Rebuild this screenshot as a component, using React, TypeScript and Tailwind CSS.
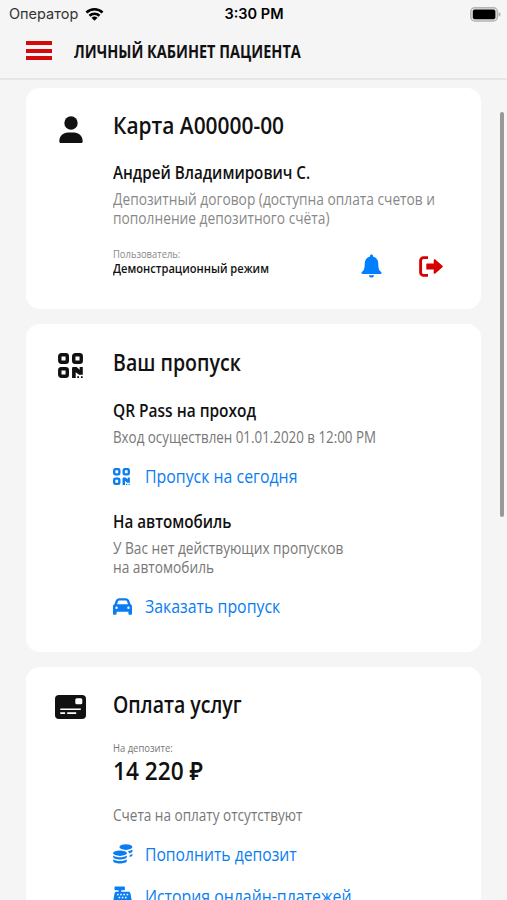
import type { ReactNode } from "react";
import { FaCar } from "react-icons/fa6";

function WifiIcon() {
  return (
    <svg width="19" height="15" viewBox="0 0 20 15" fill="none" stroke="#000" strokeWidth="2.7">
      <path d="M1.5 5.4a12.4 12.4 0 0 1 17 0" />
      <path d="M4.7 8.8a7.8 7.8 0 0 1 10.6 0" />
      <path d="M10 14.2 6.8 11a4.7 4.7 0 0 1 6.4 0z" fill="#000" stroke="none" />
    </svg>
  );
}

function BatteryIcon() {
  return (
    <svg width="31" height="15" viewBox="0 0 31 15">
      <rect x="0.8" y="0.8" width="26.6" height="13.2" rx="4" fill="#e4e4e4" stroke="#b5b5b5" strokeWidth="1.5" />
      <rect x="2.8" y="2.6" width="22.6" height="9.6" rx="2" fill="#000" />
      <path d="M28.6 5.2c1.3.4 2 1.2 2 2.2s-.7 1.800-2 2.200z" fill="#b0b0b0" />
    </svg>
  );
}

function PersonIcon() {
  return (
    <svg width="24" height="28" viewBox="0 0 24 28" fill="#111">
      <circle cx="12" cy="7" r="6.7" />
      <path d="M0.3 25.6C0.3 20 4 16.5 9 16.5h6c5 0 8.7 3.5 8.7 9.1 0 .9-.6 1.5-1.5 1.5H1.8c-.9 0-1.5-.6-1.5-1.5z" />
    </svg>
  );
}

function QrIcon({ size }: { size: number }) {
  return (
    <svg width={size} height={size} viewBox="0 0 24 24" fill="currentColor">
      <g fill="none" stroke="currentColor" strokeWidth="3.3">
        <rect x="1.7" y="1.7" width="7.2" height="7.2" rx="1.5" />
        <rect x="15.1" y="1.7" width="7.2" height="7.2" rx="1.5" />
        <rect x="1.7" y="15.1" width="7.2" height="7.2" rx="1.5" />
      </g>
      <path d="M13.5 14.4q0-1 1-1h3.4l2.9 2.6v-2.6h3v7.4h-3.6l-3.2-2.300v5.500h-3.500z" />
      <path d="M18.500 22.200h1.700v1.800h-1.700zM22 22.200h1.700v1.800H22z" />
    </svg>
  );
}

function BellIcon() {
  return (
    <svg width="21" height="24" viewBox="0 0 21 24" fill="#0080ff">
      <path d="M10.500.4c.9 0 1.500.6 1.500 1.500v.5c3.400.8 5.300 3.500 5.300 7.200 0 5.200.8 6.800 2.800 8.500.8.800.5 1.800-.6 1.800h-18c-1.100 0-1.400-1-.6-1.800 2-1.700 2.800-3.300 2.800-8.500 0-3.700 1.900-6.400 5.300-7.200v-.5c0-.9.600-1.500 1.500-1.500z" />
      <path d="M7.800 21.200h5.400c-.3 1.400-1.400 2.300-2.700 2.300s-2.400-.9-2.700-2.300z" />
    </svg>
  );
}

function LogoutIcon() {
  return (
    <svg width="24" height="21" viewBox="0 0 24 21">
      <path d="M9 1.6H4.6a3 3 0 0 0-3 3v11.8a3 3 0 0 0 3 3H9" fill="none" stroke="#d60000" strokeWidth="2.9" />
      <path d="M8.200 7.400h6.500V4.300c0-.9.900-1.300 1.600-.7l7.100 6.200c.5.400.5 1 0 1.400l-7.100 6.200c-.7.600-1.600.2-1.600-.7v-3.100H8.200c-.5 0-.9-.4-.9-.9V8.300c0-.5.4-.9.9-.9z" fill="#d60000" />
    </svg>
  );
}

function CardIcon() {
  return (
    <svg width="31" height="24" viewBox="0 0 31 24">
      <rect width="31" height="24" rx="4" fill="#111" />
      <rect x="20.3" y="3.2" width="7" height="6" rx="1.5" fill="#fff" />
      <path d="M5.3 13.5h20.5v1.5H5.3zM5.3 17.3h4.8v1.7H5.3zM12.2 17.3h9v1.7h-9z" fill="#fff" />
    </svg>
  );
}

function CoinsIcon() {
  return (
    <svg width="20" height="20" viewBox="0 0 20 20" fill="currentColor">
      <ellipse cx="12.900" cy="3.100" rx="6.500" ry="2.800" />
      <path d="M14.800 7.300c2-.3 3.600-.9 4.600-1.700v1.700c0 .9-1.200 1.700-3 2.200-.3-.9-.9-1.600-1.600-2.200zM16.700 11c1.100-.3 2-.7 2.700-1.200v1.500c0 .7-1 1.400-2.700 1.800z" />
      <ellipse cx="7" cy="9.200" rx="6.800" ry="2.700" />
      <path d="M.2 11.500c1.400 1.200 3.900 1.800 6.800 1.800s5.400-.6 6.800-1.800v1.600c0 1.400-3 2.500-6.800 2.500S.2 14.500.2 13.100z" />
      <path d="M.2 15.300c1.400 1.200 3.900 1.800 6.800 1.800s5.400-.6 6.800-1.800v1.700c0 1.400-3 2.500-6.800 2.500S.2 18.400.2 17z" />
    </svg>
  );
}

function RegisterIcon() {
  return (
    <svg width="19" height="20" viewBox="0 0 19 20" fill="currentColor">
      <path d="M2.500.5h8.400c.6 0 1 .4 1 1v1.700c0 .6-.4 1-1 1H8.200v1.500h7.300c1 0 1.700.6 1.900 1.600l1.300 7.200v3.800c0 .8-.6 1.400-1.400 1.400H1.700c-.8 0-1.400-.6-1.400-1.400v-3.800l1.300-7.200c.2-1 .9-1.600 1.900-1.600h2.100V4.200H2.500c-.6 0-1-.4-1-1V1.500c0-.6.4-1 1-1z" />
      <g fill="#fff">
        <rect x="4" y="7.800" width="1.600" height="1.500" />
        <rect x="7.200" y="7.800" width="1.600" height="1.500" />
        <rect x="10.400" y="7.800" width="1.600" height="1.500" />
        <rect x="13.600" y="7.800" width="1.600" height="1.500" />
        <rect x="5.600" y="10.800" width="1.600" height="1.500" />
        <rect x="8.800" y="10.800" width="1.600" height="1.500" />
        <rect x="12" y="10.800" width="1.600" height="1.500" />
      </g>
    </svg>
  );
}

function Card({ icon, className, children }: { icon: ReactNode; className: string; children: ReactNode }) {
  return (
    <section className={`flex shrink-0 rounded-[14px] bg-white ${className}`}>
      <div className="flex w-[87px] shrink-0 justify-center pl-[2px] pt-[6px]">{icon}</div>
      <div className="flex-1">{children}</div>
    </section>
  );
}

// Headings and text are squeezed horizontally to get a condensed face
function Title({ children, className }: { children: ReactNode; className: string }) {
  return <h2 className={`w-max origin-left whitespace-nowrap text-[23px] font-semibold leading-[30px] ${className}`}>{children}</h2>;
}

function Subtitle({ children, className }: { children: ReactNode; className: string }) {
  return <h3 className={`w-max origin-left whitespace-nowrap text-[17.5px] font-semibold leading-6 ${className}`}>{children}</h3>;
}

function Text({ children, className }: { children: ReactNode; className: string }) {
  return <p className={`w-max origin-left whitespace-nowrap text-[15.5px] leading-[19px] ${className}`}>{children}</p>;
}

function Link({ icon, children, className, textClass }: { icon: ReactNode; children: ReactNode; className: string; textClass: string }) {
  return (
    <a className={`flex h-6 items-center whitespace-nowrap text-[18px] leading-6 text-[#0a7df2] ${className}`}>
      <span className="flex w-8 shrink-0 items-center">{icon}</span>
      <span className={`origin-left ${textClass}`}>{children}</span>
    </a>
  );
}

export default function App() {
  return (
    <div className="flex h-[900px] w-[507px] flex-col overflow-hidden bg-[#f5f5f5] font-['Open_Sans','Noto_Sans',sans-serif] text-[#111]">
      {/* Status bar */}
      <div className="grid h-7 shrink-0 grid-cols-3 items-center pl-[9px] pr-[6px] font-['Inter',sans-serif]">
        <div className="flex items-center gap-[7px] text-[14.5px] text-[#333]">
          <span>Оператор</span>
          <WifiIcon />
        </div>
        <div className="pr-[2px] text-center text-[14.5px] font-semibold text-black">3:30 PM</div>
        <div className="flex justify-end">
          <BatteryIcon />
        </div>
      </div>

      {/* Header */}
      <header className="flex h-[52px] shrink-0 items-center border-b-2 border-[#e6e6e6] pb-[5px] pl-[26px]">
        <button className="flex w-[26px] flex-col gap-[3.5px]">
          <span className="h-1 bg-[#d40a0a]" />
          <span className="h-1 bg-[#d40a0a]" />
          <span className="h-1 bg-[#d40a0a]" />
        </button>
        <h1 className="ml-[22px] origin-left scale-x-[0.804] whitespace-nowrap pt-px text-[18px] font-bold leading-6">ЛИЧНЫЙ КАБИНЕТ ПАЦИЕНТА</h1>
      </header>

      <div className="relative flex flex-1 flex-col gap-[15px] overflow-hidden px-[26px] pt-2">
        {/* Patient card */}
        <Card className="h-[221px] pt-[22px]" icon={<PersonIcon />}>
          <Title className="scale-x-[0.909]">Карта A00000-00</Title>
          <Subtitle className="mt-[20px] scale-x-[0.867]">Андрей Владимирович С.</Subtitle>
          <Text className="mt-[6px] scale-x-[0.887] text-[#888]">
            Депозитный договор (доступна оплата счетов и
            <br />
            пополнение депозитного счёта)
          </Text>
          <div className="mt-5 flex items-start">
            <div className="w-[248px] whitespace-nowrap">
              <p className="w-max origin-left scale-x-[0.94] text-[10px] leading-3 text-[#888]">Пользователь:</p>
              <p className="w-max origin-left scale-x-[0.89] text-[12.5px] font-semibold leading-[18px]">Демонстрационный режим</p>
            </div>
            <button className="mt-[5.5px]">
              <BellIcon />
            </button>
            <button className="ml-9 mt-[7.5px] pl-px">
              <LogoutIcon />
            </button>
          </div>
        </Card>

        {/* Pass */}
        <Card className="h-[328px] pt-[23px]" icon={<QrIcon size={25} />}>
          <Title className="scale-x-[0.85]">Ваш пропуск</Title>
          <Subtitle className="mt-[21px] scale-x-[0.884]">QR Pass на проход</Subtitle>
          <Text className="mt-[6px] scale-x-[0.861] text-[#777]">Вход осуществлен 01.01.2020 в 12:00 PM</Text>
          <Link className="mt-[17px]" textClass="scale-x-[0.882]" icon={<QrIcon size={17} />}>Пропуск на сегодня</Link>
          <Subtitle className="mt-[21px] scale-x-[0.869]">На автомобиль</Subtitle>
          <Text className="mt-[6px] scale-x-[0.884] text-[#777]">
            У Вас нет действующих пропусков
            <br />
            на автомобиль
          </Text>
          <Link className="mt-[17px]" textClass="scale-x-[0.882]" icon={<FaCar className="h-[19px] w-[19px]" />}>Заказать пропуск</Link>
        </Card>

        {/* Payments */}
        <Card className="h-[328px] pt-[22px]" icon={<CardIcon />}>
          <Title className="scale-x-[0.848]">Оплата услуг</Title>
          <p className="mt-[23px] w-max origin-left scale-x-[0.945] text-[10px] leading-3 text-[#777]">На депозите:</p>
          <p className="mt-px w-max origin-left scale-x-[0.906] text-[25px] font-semibold leading-[30px]">14 220 ₽</p>
          <Text className="mt-[21px] scale-x-[0.875] text-[#777]">Счета на оплату отсутствуют</Text>
          <Link className="mt-[17px]" textClass="scale-x-[0.872]" icon={<CoinsIcon />}>Пополнить депозит</Link>
          <Link className="mt-[18px]" textClass="scale-x-[0.88]" icon={<RegisterIcon />}>История онлайн-платежей</Link>
        </Card>

        {/* Scroll indicator */}
        <div className="absolute right-[3px] top-[32px] h-[405px] w-[4px] rounded-full bg-[#989898]" />
      </div>
    </div>
  );
}
